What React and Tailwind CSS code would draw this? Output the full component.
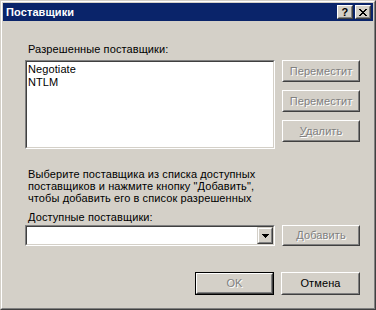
import React from "react";

const FONT = "font-['Liberation_Sans','Arial',sans-serif] text-[11px] tracking-[0.1px]";
const dis = "text-[#808080] [text-shadow:1px_1px_0_#ffffff]";

function Btn({ children, disabled, def, className = "" }) {
  const inner = (
    <div className="h-full border border-t-white border-l-white border-b-[#404040] border-r-[#404040]">
      <div
        className={`h-full flex items-center justify-center border border-t-[#d4d0c8] border-l-[#d4d0c8] border-b-[#808080] border-r-[#808080] ${
          disabled ? dis : "text-black"
        }`}
      >
        {children}
      </div>
    </div>
  );
  if (def) {
    return <div className={`border border-black ${className}`}>{inner}</div>;
  }
  return <div className={className}>{inner}</div>;
}

function Sunken({ children, className = "" }) {
  return (
    <div
      className={`border border-t-[#808080] border-l-[#808080] border-b-white border-r-white ${className}`}
    >
      <div className="h-full border border-t-[#404040] border-l-[#404040] border-b-[#d4d0c8] border-r-[#d4d0c8] bg-white">
        {children}
      </div>
    </div>
  );
}

function TitleBtn({ children }) {
  return (
    <div className="w-4 h-[14px] bg-[#d4d0c8] border border-t-white border-l-white border-b-[#404040] border-r-[#404040]">
      <div className="h-full flex items-center justify-center border border-t-[#d4d0c8] border-l-[#d4d0c8] border-b-[#808080] border-r-[#808080]">
        {children}
      </div>
    </div>
  );
}

export default function App() {
  return (
    <div className={`w-[376px] h-[310px] bg-[#d4d0c8] ${FONT} leading-[13px] text-black`}>
      {/* window frame */}
      <div className="w-full h-full border border-t-[#d4d0c8] border-l-[#d4d0c8] border-b-[#404040] border-r-[#404040]">
        <div className="w-full h-full border border-t-white border-l-white border-b-[#808080] border-r-[#808080] p-px flex flex-col">
          {/* Title bar */}
          <div className="h-[18px] bg-[#0a246a] flex items-center pl-[3px] pr-[2px]">
            <span className="text-white font-bold text-[11px] flex-1">Поставщики</span>
            <div className="flex gap-[2px]">
              <TitleBtn>
                <span className="font-bold text-[11px] leading-none text-black mt-px">?</span>
              </TitleBtn>
              <TitleBtn>
                <svg width="8" height="7" viewBox="0 0 8 7" shapeRendering="crispEdges">
                  <path
                    d="M0 0h2v1h-2zM6 0h2v1h-2zM1 1h2v1h-2zM5 1h2v1h-2zM2 2h4v1h-4zM3 3h2v1h-2zM2 4h4v1h-4zM1 5h2v1h-2zM5 5h2v1h-2zM0 6h2v1h-2zM6 6h2v1h-2z"
                    fill="#000"
                  />
                </svg>
              </TitleBtn>
            </div>
          </div>

          {/* Client area */}
          <div className="flex-1 flex flex-col pl-[22px] pr-[13px] pt-[22px]">
            <div className="pl-[3px]">Разрешенные поставщики:</div>

            <div className="flex gap-[7px] mt-[4px]">
              <Sunken className="w-[250px] h-[89px]">
                <div className="pl-px pt-px">
                  <div>Negotiate</div>
                  <div>NTLM</div>
                </div>
              </Sunken>
              <div className="flex flex-col gap-[8px]">
                <Btn disabled className="w-[78px] h-[22px]">Переместит</Btn>
                <Btn disabled className="w-[78px] h-[22px]">Переместит</Btn>
                <Btn disabled className="w-[78px] h-[22px]">
                  <span><span className="underline">У</span>далить</span>
                </Btn>
              </div>
            </div>

            <div className="pl-[3px] mt-[19px] leading-[12px]">
              <div>Выберите поставщика из списка доступных</div>
              <div>поставщиков и нажмите кнопку "Добавить",</div>
              <div>чтобы добавить его в список разрешенных</div>
            </div>
            <div className="pl-[3px] mt-[7px] leading-[12px]">Доступные поставщики:</div>

            <div className="flex gap-[7px] mt-[2px]">
              <Sunken className="w-[250px] h-[21px]">
                <div className="h-full flex justify-end">
                  <div className="w-4 h-full bg-[#d4d0c8] border border-t-[#d4d0c8] border-l-[#d4d0c8] border-b-[#404040] border-r-[#404040]">
                    <div className="h-full flex items-center justify-center border border-t-white border-l-white border-b-[#808080] border-r-[#808080]">
                      <svg width="7" height="4" viewBox="0 0 7 4" shapeRendering="crispEdges">
                        <path d="M0 0h7v1h-7zM1 1h5v1h-5zM2 2h3v1h-3zM3 3h1v1h-1z" fill="#000" />
                      </svg>
                    </div>
                  </div>
                </div>
              </Sunken>
              <Btn disabled className="w-[78px] h-[21px]">
                <span><span className="underline">Д</span>обавить</span>
              </Btn>
            </div>

            <div className="flex justify-end gap-[7px] mt-[26px]">
              <Btn disabled def className="w-[79px] h-[23px]">OK</Btn>
              <Btn className="w-[79px] h-[23px]">Отмена</Btn>
            </div>
          </div>
        </div>
      </div>
    </div>
  );
}
